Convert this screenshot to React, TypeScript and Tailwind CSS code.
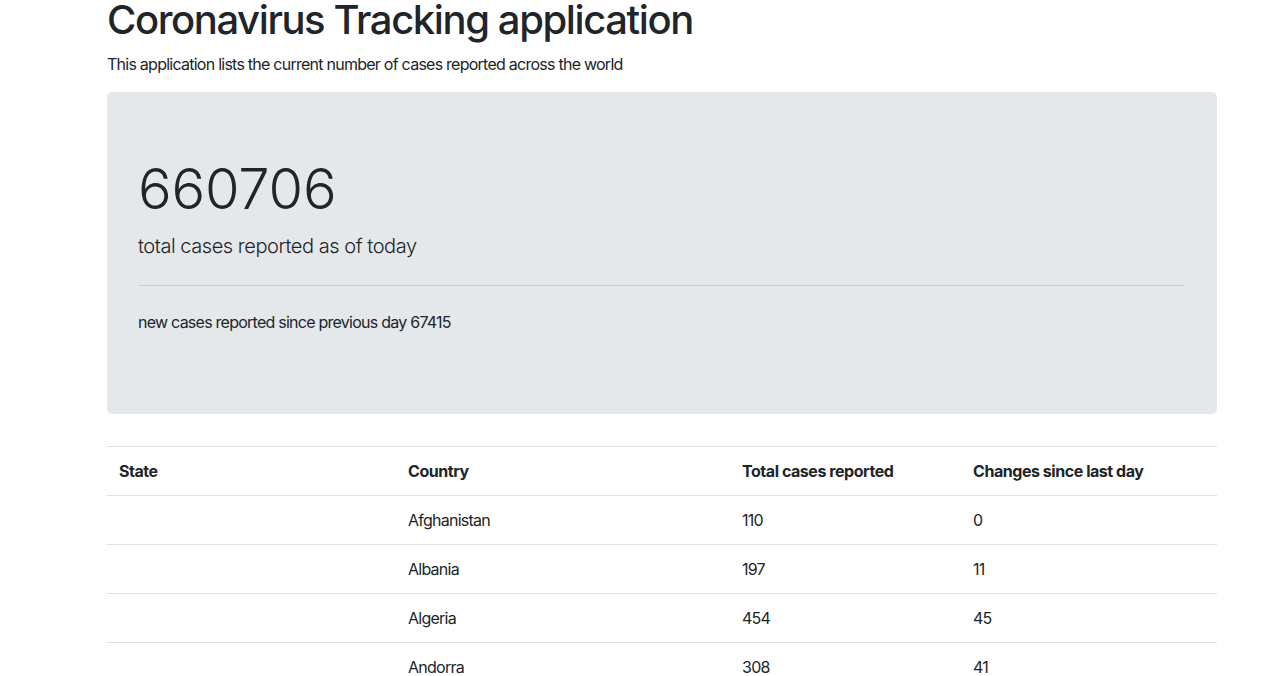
interface CaseRow {
  state: string;
  country: string;
  total: number;
  change: number;
}

const rows: CaseRow[] = [
  { state: "", country: "Afghanistan", total: 110, change: 0 },
  { state: "", country: "Albania", total: 197, change: 11 },
  { state: "", country: "Algeria", total: 454, change: 45 },
  { state: "", country: "Andorra", total: 308, change: 41 },
  { state: "", country: "Angola", total: 4, change: 2 },
];

const cols = "grid grid-cols-[289px_334px_231px_256px]";

function App() {
  return (
    <div className="h-screen bg-white text-[#212529] font-['Inter','Liberation_Sans',sans-serif] overflow-hidden">
      <div className="w-[1110px] ml-[107px]">
        <h1 className="-mt-[4px] mb-2 text-[40px] leading-[48px] font-medium tracking-[-1.4px]">
          Coronavirus Tracking application
        </h1>
        <p className="mb-4 text-[16px] leading-6 tracking-[-0.75px]">
          This application lists the current number of cases reported across the world
        </p>

        {/* Jumbotron */}
        <div className="bg-[#e5e8eb] rounded-[5px] pl-[31px] pr-8 py-16 mb-8">
          <h2 className="text-[56px] leading-[67px] font-light mb-2 tracking-[-0.2px]">660706</h2>
          <p className="text-[20px] leading-[30px] font-light tracking-[-0.45px]">
            total cases reported as of today
          </p>
          <hr className="my-6 border-0 border-t border-black/10" />
          <p className="mb-4 text-[16px] leading-6 tracking-[-0.75px]">
            new cases reported since previous day 67415
          </p>
        </div>

        {/* Table */}
        <div className="text-[16px] leading-6 tracking-[-0.75px]">
          <div className={`${cols} border-t border-b border-[#dee2e6] font-bold tracking-[-0.45px]`}>
            <div className="p-3">State</div>
            <div className="p-3">Country</div>
            <div className="p-3">Total cases reported</div>
            <div className="p-3">Changes since last day</div>
          </div>
          {rows.map((r) => (
            <div key={r.country} className={`${cols} border-b border-[#dee2e6]`}>
              <div className="p-3">{r.state}</div>
              <div className="p-3">{r.country}</div>
              <div className="p-3">{r.total}</div>
              <div className="p-3">{r.change}</div>
            </div>
          ))}
        </div>
      </div>
    </div>
  );
}

export default App;
